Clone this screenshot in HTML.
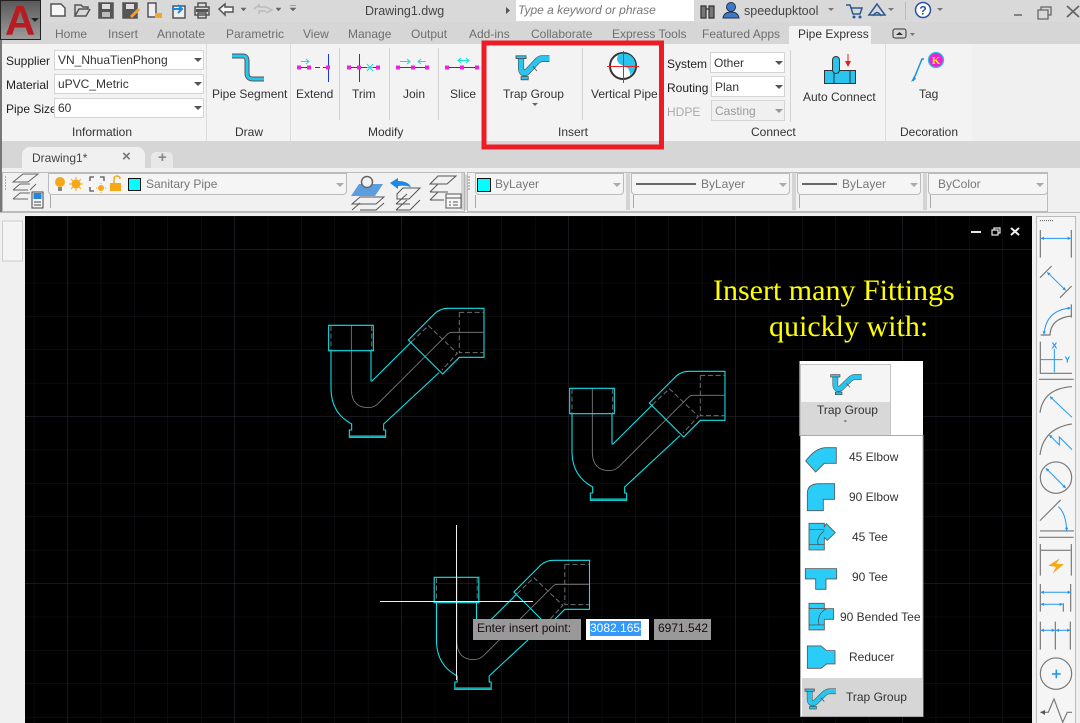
<!DOCTYPE html>
<html><head><meta charset="utf-8"><style>
html,body{margin:0;padding:0;background:#f0f0f0}
#r{position:relative;width:1080px;height:723px;overflow:hidden;background:#f0f0f0;font-family:"Liberation Sans",sans-serif;font-size:12px;color:#222}
.b{position:absolute;box-sizing:border-box}
.t{position:absolute;white-space:nowrap;line-height:14px}
.g{color:#6e6e6e}
.c{background:#fff;border:1px solid #d4d4d4;position:absolute;box-sizing:border-box}
.a{position:absolute;width:0;height:0;border-left:4px solid transparent;border-right:4px solid transparent;border-top:4px solid #555}
svg{position:absolute;left:0;top:0;overflow:visible}
</style></head><body><div id="r">
<div class="b" style="left:0;top:0;width:1080px;height:22px;background:#d9d9d9"></div>
<div class="b" style="left:0;top:22px;width:1080px;height:22px;background:#d6d6d6"></div>
<div class="b" style="left:0;top:141px;width:1080px;height:27px;background:#d6d6d6"></div>
<div class="b" style="left:0;top:44px;width:972px;height:97px;background:#f3f3f3"></div>
<div class="b" style="left:789px;top:26px;width:82px;height:18px;background:#f3f3f3;border-radius:2px 2px 0 0"></div>
<div class="b" style="left:0;top:0;width:2px;height:212px;background:#777"></div>
<!-- logo -->
<div class="b" style="left:0;top:0;width:41px;height:40px;border:1px solid #222;background:linear-gradient(#5a5a5a,#9c9c9c);"></div>
<div class="t" style="left:5px;top:3px;font-size:42px;line-height:36px;font-weight:bold;color:#b81c22;">A</div>
<div class="a" style="left:31px;top:18px;border-top-color:#222"></div>
<!-- search -->
<div class="b" style="left:516px;top:0;width:178px;height:21px;background:#fff"></div>
<div class="t" style="left:518px;top:3px;font-style:italic;color:#777">Type a keyword or phrase</div>
<div class="t" style="left:744px;top:4px;color:#444;font-size:12.5px">speedupktool</div>
<div class="t" style="left:365px;top:4px;color:#444;font-size:12.5px">Drawing1.dwg</div>
<!-- tabs -->
<div class="t g" style="left:55px;top:27px">Home</div>
<div class="t g" style="left:108px;top:27px">Insert</div>
<div class="t g" style="left:157px;top:27px">Annotate</div>
<div class="t g" style="left:226px;top:27px">Parametric</div>
<div class="t g" style="left:303px;top:27px">View</div>
<div class="t g" style="left:348px;top:27px">Manage</div>
<div class="t g" style="left:411px;top:27px">Output</div>
<div class="t g" style="left:469px;top:27px">Add-ins</div>
<div class="t g" style="left:531px;top:27px">Collaborate</div>
<div class="t g" style="left:612px;top:27px">Express Tools</div>
<div class="t g" style="left:702px;top:27px">Featured Apps</div>
<div class="t" style="left:798px;top:27px;color:#333">Pipe Express</div>
<!-- combos -->
<div class="t" style="left:6px;top:54px">Supplier</div>
<div class="t" style="left:6px;top:78px">Material</div>
<div class="t" style="left:6px;top:102px">Pipe Size</div>
<div class="c" style="left:54px;top:50px;width:150px;height:20px"></div><div class="t" style="left:58px;top:53px;color:#333">VN_NhuaTienPhong</div><div class="a" style="left:194px;top:58px"></div>
<div class="c" style="left:54px;top:74px;width:150px;height:20px"></div><div class="t" style="left:58px;top:77px;color:#333">uPVC_Metric</div><div class="a" style="left:194px;top:82px"></div>
<div class="c" style="left:54px;top:98px;width:150px;height:20px"></div><div class="t" style="left:58px;top:101px;color:#333">60</div><div class="a" style="left:194px;top:106px"></div>
<div class="t" style="left:667px;top:57px">System</div>
<div class="t" style="left:667px;top:81px">Routing</div>
<div class="t" style="left:667px;top:105px;color:#aaa">HDPE</div>
<div class="c" style="left:710px;top:52px;width:75px;height:21px"></div><div class="t" style="left:714px;top:56px;color:#333">Other</div><div class="a" style="left:775px;top:61px"></div>
<div class="c" style="left:711px;top:76px;width:74px;height:21px"></div><div class="t" style="left:715px;top:80px;color:#333">Plan</div><div class="a" style="left:775px;top:85px"></div>
<div class="c" style="left:711px;top:100px;width:74px;height:21px;background:#f0f0f0"></div><div class="t" style="left:715px;top:104px;color:#999">Casting</div><div class="a" style="left:775px;top:109px;border-top-color:#999"></div>
<!-- ribbon labels -->
<div class="t" style="left:212px;top:87px;color:#333">Pipe Segment</div>
<div class="t" style="left:296px;top:87px;color:#333">Extend</div>
<div class="t" style="left:352px;top:87px;color:#333">Trim</div>
<div class="t" style="left:403px;top:87px;color:#333">Join</div>
<div class="t" style="left:450px;top:87px;color:#333">Slice</div>
<div class="t" style="left:503px;top:87px;color:#333">Trap Group</div>
<div class="t" style="left:591px;top:87px;color:#333">Vertical Pipe</div>
<div class="t" style="left:803px;top:90px;color:#333">Auto Connect</div>
<div class="t" style="left:919px;top:87px;color:#333">Tag</div>
<div class="t" style="left:72px;top:125px;color:#333">Information</div>
<div class="t" style="left:235px;top:125px;color:#333">Draw</div>
<div class="t" style="left:368px;top:125px;color:#333">Modify</div>
<div class="t" style="left:558px;top:125px;color:#333">Insert</div>
<div class="t" style="left:751px;top:125px;color:#333">Connect</div>
<div class="t" style="left:900px;top:125px;color:#333">Decoration</div>
<!-- doc tab -->
<div class="b" style="left:22px;top:147px;width:123px;height:21px;background:#f0f0f0;border-radius:8px 8px 0 0"></div>
<div class="b" style="left:151px;top:152px;width:22px;height:16px;background:#e8e8e8;border-radius:5px 5px 0 0"></div>
<div class="t" style="left:32px;top:151px;color:#444">Drawing1*</div>
<div class="t" style="left:122px;top:150px;color:#777;font-size:15px;font-weight:bold">×</div>
<div class="t" style="left:158px;top:151px;color:#888;font-size:15px;font-weight:bold">+</div>
<!-- toolbar -->
<div class="b" style="left:2px;top:172px;width:463px;height:40px;border:1px solid #bbb;background:#f1f1f1"></div>
<div class="b" style="left:467px;top:172px;width:581px;height:40px;border:1px solid #bbb;background:#f1f1f1"></div>
<div class="b" style="left:0;top:212px;width:1080px;height:1px;background:#bbb"></div>
<div class="b" style="left:48px;top:173px;width:299px;height:22px;background:#f5f5f5;border:1px solid #bbb;border-radius:0 0 4px 4px"></div>
<div class="b" style="left:475px;top:173px;width:149px;height:22px;background:#f5f5f5;border:1px solid #bbb;border-radius:0 0 4px 4px"></div>
<div class="b" style="left:631px;top:173px;width:159px;height:22px;background:#f5f5f5;border:1px solid #bbb;border-radius:0 0 4px 4px"></div>
<div class="b" style="left:797px;top:173px;width:124px;height:22px;background:#f5f5f5;border:1px solid #bbb;border-radius:0 0 4px 4px"></div>
<div class="b" style="left:928px;top:173px;width:120px;height:22px;background:#f5f5f5;border:1px solid #bbb;border-radius:0 0 4px 4px"></div>
<div class="t" style="left:146px;top:177px;color:#777">Sanitary Pipe</div>
<div class="t" style="left:495px;top:177px;color:#777">ByLayer</div>
<div class="t" style="left:701px;top:177px;color:#777">ByLayer</div>
<div class="t" style="left:842px;top:177px;color:#777">ByLayer</div>
<div class="t" style="left:938px;top:177px;color:#777">ByColor</div>
<div class="a" style="left:336px;top:183px;border-top-color:#aaa"></div><div class="a" style="left:613px;top:183px;border-top-color:#aaa"></div><div class="a" style="left:779px;top:183px;border-top-color:#aaa"></div><div class="a" style="left:910px;top:183px;border-top-color:#aaa"></div><div class="a" style="left:1036px;top:183px;border-top-color:#aaa"></div>
<!-- canvas -->
<div class="b" style="left:25px;top:216px;width:1007px;height:507px;background:#000"></div>
<svg width="1080" height="723" viewBox="0 0 1080 723" fill="none">
<defs>
<pattern id="gm" patternUnits="userSpaceOnUse" x="0.5" y="15.5" width="33.4" height="33.4"><path d="M0 0V33.4M0 0H33.4" stroke="#14161c"/></pattern>
<pattern id="gM" patternUnits="userSpaceOnUse" x="67.5" y="82.5" width="167" height="167"><path d="M0 0V167M0 0H167" stroke="#262830"/></pattern>
<marker id="m" viewBox="0 0 10 10" refX="9" refY="5" markerWidth="10" markerHeight="10" markerUnits="userSpaceOnUse" orient="auto-start-reverse"><path d="M0 0L10 5L0 10Z" fill="#2196f3"/></marker>
<g id="tr">
<g stroke="#808080" stroke-width="2.5"><path d="M94 76V270Q96 323 145 323Q165 323 180 305L385 100Q390 97 397 97H490"/></g>
<g stroke="#6f6f6f" stroke-width="3" stroke-dasharray="15 8"><path d="M418 37H490M418 37V158H490M275 125L325 77L412 160L366 210M33 78V150M155 78V150"/></g>
<g stroke="#10e4ea" stroke-width="3.2"><path d="M26 76H160V152H26ZM33 152V270Q35 340 95 372V390H88V412H197V390H191V372L357 218M153 152V243H156L275 125M265 120L368 222L418 172H492V25H385Q358 25 340 45L265 120ZM90 408H195"/></g>
</g>
<g id="tg"><path d="M14 8V33Q15 49 30 43L60 14Q67 9 73 9H93" stroke="#444" stroke-width="17"/><path d="M14 8V33Q15 49 30 43L60 14Q67 9 73 9H93" stroke="#29c5ee" stroke-width="14"/><rect x="0" y="2" width="28" height="7" fill="#29c5ee" stroke="#444" stroke-width="2"/><rect x="14" y="54" width="20" height="8" fill="#29c5ee" stroke="#444" stroke-width="2"/><path d="M47 28L58 40" stroke="#444" stroke-width="2"/></g>
</defs>
<!-- ribbon dividers -->
<path d="M206.5 44V141M290.5 44V141M885.5 44V141" stroke="#dcdcdc"/>
<path d="M339.5 48V120M389.5 48V120M438.5 48V120M582.5 48V120M790.5 50V122" stroke="#d2d2d2"/>
<!-- QAT -->
<g stroke="#555" stroke-width="1.5" transform="translate(0,0)">
<path d="M51 4H61L65 8V16H51Z" fill="#f7f7f7"/>
<path d="M75 16V5H81L83 7H88V9H79L75 16H86L90 9" />
<path d="M99 3H113V18H99Z" fill="#555"/><rect x="102" y="4" width="8" height="5" fill="#ddd" stroke="none"/><rect x="102" y="12" width="8" height="5" fill="#bbb" stroke="none"/>
<path d="M123 3H137V18H123Z" fill="#555"/><rect x="126" y="4" width="8" height="5" fill="#ddd" stroke="none"/><path d="M131 17L139 9" stroke="#f0a030" stroke-width="3"/>
<path d="M148 3H156V17H148Z" fill="#eee"/><rect x="155" y="13" width="7" height="5" fill="#f4a820" stroke="none"/>
<path d="M173 6H185V18H173Z" fill="#eee"/><path d="M172 9H182M178 5L182 9L178 13" stroke="#1c88d8" stroke-width="2"/>
<path d="M198 3H206V7H198ZM195 7H209V15H195ZM198 13H206V18H198Z" fill="#ddd"/><rect x="196" y="9" width="12" height="3" fill="#555" stroke="none"/>
<path d="M219 9L225 4V7H233V12H225V15Z" fill="#f5f5f5"/>
<path d="M254 9L259 5V7H266M259 14V11H266M266 7L272 10L266 13" stroke="#bbb" fill="none"/>
</g>
<path d="M241 8l2.5 3l2.5-3ZM276 8l2.500 3l2.500-3ZM290 8l3 3l3-3ZM290 5.500h6" fill="#666" stroke="#666" stroke-width=".5"/>
<path d="M506 7l4 3.500l-4 3.500Z" fill="#555"/>
<!-- user area -->
<g stroke="#333" stroke-width="1.2"><path d="M701 6h5v12h-5ZM709 6h5v12h-5ZM706 9h3" fill="#777"/></g>
<circle cx="731" cy="7" r="4.500" fill="#3f78c8" stroke="#234"/><path d="M723 18Q724 12 731 12Q738 12 739 18Z" fill="#3f78c8" stroke="#234"/>
<path d="M828 8l3 3l3-3ZM888 8l3 3l3-3ZM937 8l3 3l3-3Z" fill="#777"/>
<path d="M846 5H850L853 14H860L862 8H851" stroke="#2c5a90" stroke-width="1.500"/><circle cx="854" cy="17" r="1.500" fill="#2c5a90"/><circle cx="860" cy="17" r="1.500" fill="#2c5a90"/>
<path d="M877 4L869 15H885ZM873 16Q877 9 881 16" stroke="#2c5a90" stroke-width="1.500"/>
<path d="M905.500 2V20" stroke="#bbb"/>
<circle cx="923" cy="10" r="7.500" fill="#fff" stroke="#2c50a0" stroke-width="1.500"/>
<text x="923" y="14.500" font-family="Liberation Sans" font-size="12" font-weight="bold" fill="#2c50a0" text-anchor="middle">?</text>
<path d="M1014 15H1022" stroke="#666" stroke-width="1.500"/><path d="M1038 10H1048V19H1038ZM1041 10V7H1051V15H1048" stroke="#666" stroke-width="1.300"/><path d="M1067 6L1079 17M1079 6L1067 17" stroke="#666" stroke-width="1.800"/>
<rect x="893" y="29" width="13" height="9" rx="2" stroke="#333"/><path d="M896 35l3.500-3l3.500 3Z" fill="#333"/><path d="M910 33l2.500 3l2.500-3Z" fill="#777"/>
<!-- pipe segment icon -->
<path d="M232 56H243Q247 56 247 61V73Q247 79 253 79H264" stroke="#555" stroke-width="5"/><path d="M232 56H243Q247 56 247 61V73Q247 79 253 79H264" stroke="#29c5ee" stroke-width="3"/>
<!-- modify icons -->
<g stroke="#1a36e0" stroke-width="1"><path d="M299 67.500H310M315 67.500H320M323 67.500H328M328.500 54V82M359.500 54V82M349 67.500H367M373 67.500H378M398 67.500H427M447 67.500H477"/></g>
<g fill="#f020e0"><rect x="297" y="65.500" width="4" height="4"/><rect x="307" y="65.500" width="4" height="4"/><rect x="326" y="65.500" width="4" height="4"/><rect x="347" y="65.500" width="4" height="4"/><rect x="357" y="65.500" width="4" height="4"/><rect x="376" y="65.500" width="4" height="4"/><rect x="396" y="65.500" width="4" height="4"/><rect x="411" y="65.500" width="4" height="4"/><rect x="425" y="65.500" width="4" height="4"/><rect x="445" y="65.500" width="4" height="4"/><rect x="460" y="65.500" width="4" height="4"/><rect x="475" y="65.500" width="4" height="4"/></g>
<g stroke="#18dcd8"><path d="M301 61.500H309M306 59L309 61.500L306 64M367 64L373 71M373 64L367 71M367 67.500H373M400 61.500H410M407 59L410 61.500L407 64M418 61.500H426M421 59L418 61.500L421 64M458 60.500H469M461 58L458 60.500L461 63M466 58L469 60.500L466 63"/></g>
<!-- trap icon ribbon -->
<use href="#tg" transform="translate(516,55) scale(.36,.4)"/>
<path d="M532 103l3 3l3-3Z" fill="#666"/>
<!-- vertical pipe -->
<circle cx="623" cy="66" r="13" fill="#fff" stroke="#333" stroke-width="2"/>
<path d="M619 54Q632 52 635 62Q637 70 630 75Q630 68 624 66Q618 64 617 60Q617 56 619 54Z" fill="#29c5ee"/>
<path d="M607 66.500H639M623.500 51V83" stroke="#e82020"/>
<!-- auto connect -->
<rect x="824.500" y="70.500" width="31" height="13" fill="#29c5ee" stroke="#333"/><path d="M834 71V84M850 71V84" stroke="#333"/>
<rect x="832.500" y="56.500" width="7" height="17" rx="3.500" fill="#29c5ee" stroke="#333"/>
<path d="M848 54V62" stroke="#e02020"/><path d="M845 61H851L848 67Z" fill="#e02020"/>
<!-- tag -->
<path d="M924 59H922L913 81" stroke="#1c90e0" stroke-width="1.500"/><path d="M911 82L914 76L916 79Z" fill="#1c90e0"/>
<circle cx="936" cy="60" r="7.500" fill="#f020d0" stroke="#18c8e8" stroke-width="1.300"/>
<text x="936" y="64" font-family="Liberation Serif" font-size="11" font-weight="bold" fill="#ffe020" text-anchor="middle">K</text>
<!-- red box -->
<rect x="484" y="43" width="177.500" height="104" stroke="#ed1c24" stroke-width="5"/>
<!-- toolbar icons -->
<path d="M5 177h1M5 180h1M5 183h1M5 186h1M5 189h1" stroke="#666"/>
<path d="M468 177h2M468 180h2M468 183h2M468 186h2M468 189h2" stroke="#888"/>
<g stroke="#666"><path d="M13 182L23 174H38L28 182ZM13 190L20 184H30M13 199L20 193H30M13 190H28M13 199H28M36 184L30 190"/><rect x="32" y="192" width="11" height="16" fill="#f6f6f6" stroke="#444"/></g><rect x="33.500" y="193" width="8" height="6" fill="#1c88e0"/><path d="M34 202h7M34 205h7" stroke="#444"/>
<path d="M50.500 195V208M475.500 195V208M633.500 195V208M799.500 195V208M930.500 195V208" stroke="#aaa"/>
<path d="M462 173V210M464 173V210M466 175V210M627 173V210M629 173V210M793 173V210M795 173V210M924 173V210M926 173V210" stroke="#aaa" stroke-width=".8"/>
<circle cx="60" cy="182" r="5" fill="#f5a818"/><rect x="58" y="187" width="4" height="4" fill="#888"/>
<circle cx="76" cy="184" r="4.500" fill="#f5a818"/><path d="M76 177V180M76 188V191M69 184H72M80 184H83M71 179L73 181M79 187L81 189M81 179L79 181M71 189L73 187" stroke="#f5a818"/>
<path d="M90 181V177H94M100 177H104V181M90 187V191H94" stroke="#555" stroke-width="1.300"/><circle cx="101" cy="188" r="3" fill="#f5a818"/><path d="M101 183V184M101 192V193M96 188H97M105 188H106" stroke="#f5a818"/>
<rect x="110" y="183" width="11" height="8" fill="#f5a818"/><path d="M114 183V179Q114 176 117 176Q120 176 120 179" stroke="#f5a818" stroke-width="1.500"/>
<rect x="128.500" y="178.500" width="12" height="12" fill="#00ffff" stroke="#111"/>
<rect x="477.500" y="178.500" width="13" height="13" fill="#00ffff" stroke="#111"/>
<path d="M636 184H696M802 184H837" stroke="#111" stroke-width="1.300"/>
<g stroke="#555"><path d="M352 204L360 197H384L376 204ZM352 210L360 203M360 210H376L384 203"/></g><path d="M351 196L359 184H383L375 196Z" fill="#5c9ce0"/><circle cx="367" cy="182" r="5.500" fill="#f4f4f4" stroke="#666" stroke-width="1.500"/>
<path d="M390 183L398 178V181Q408 181 411 187Q405 185 398 186V189Z" fill="#1c88e0"/><g stroke="#555"><path d="M397 194L403 188H420L409 199H397ZM396 204L407 194M396 210L407 200M396 204H410M396 210H410L420 200"/></g>
<g stroke="#555"><path d="M430 184L438 176H456L447 184ZM430 192L438 184M430 192H448M430 200L438 192M430 200H444"/><rect x="446" y="194" width="15" height="14" fill="#f7f7f7" stroke="#555"/><path d="M446 198H461M449 202H451M453 202H458M449 205H451M453 205H458"/></g>
<!-- canvas grid -->
<rect x="25" y="216" width="1007" height="507" fill="url(#gm)"/>
<rect x="25" y="216" width="1007" height="507" fill="url(#gM)"/>
<use href="#tr" transform="translate(320,300) scale(.3333)"/>
<use href="#tr" transform="translate(561,363) scale(.3333)"/>
<use href="#tr" transform="translate(425.500,552) scale(.3333)"/>
<path d="M456.500 525V680M380 601.500H533" stroke="#f0f0f0"/>
<path d="M971 232H981" stroke="#e8e8e8" stroke-width="2"/><path d="M992 230H998V235H992ZM994 230V228H1000V233H998" stroke="#e8e8e8" stroke-width="1.200"/><path d="M1011 228L1019 235M1019 228L1011 235" stroke="#eee" stroke-width="2"/>
<!-- left strip -->
<path d="M8 222h12" stroke="#777" stroke-dasharray="1 1"/>
<rect x="2.500" y="221" width="20" height="40" fill="#f4f4f4" stroke="#ccc"/>
<!-- right toolbar -->
<rect x="1036.500" y="216.500" width="39" height="507" fill="#f5f5f5" stroke="#bbb"/>
<g transform="translate(1030,215) scale(.3333)">
<path d="M30 17H70" stroke="#555" stroke-width="3" stroke-dasharray="3 3"/>
<g stroke="#777" stroke-width="3.500">
<path d="M31 45V128M124 45V128M30 188L65 153M90 248L125 213M124 268V308M32 360H60Q62 310 124 303M31 380V475H126M27 493H131M30 593Q40 520 126 515M30 720Q40 640 126 627"/>
<circle cx="78" cy="788" r="47"/>
<path d="M30 917L92 855M30 948H132M27 967H131M31 987V1082M124 987V1082M31 1107V1190M122 1107V1190M100 1165V1190M31 1220V1304M76 1220V1304M121 1220V1304"/>
<circle cx="78" cy="1376" r="47"/>
<path d="M31 1492H55L72 1452L98 1522L112 1492H126"/>
</g>
<g stroke="#2196f3" stroke-width="3">
<path d="M33 70H122" marker-start="url(#m)" marker-end="url(#m)"/>
<path d="M52 172L107 226" marker-start="url(#m)" marker-end="url(#m)"/>
<path d="M122 279Q48 285 42 358" marker-start="url(#m)" marker-end="url(#m)"/>
<path d="M32 434H98M73 402V472"/>
<path d="M60 545L126 607" marker-start="url(#m)"/>
<path d="M58 660L88 690V666L126 704" marker-start="url(#m)"/>
<path d="M48 760L107 819" marker-start="url(#m)" marker-end="url(#m)"/>
<path d="M85 875Q108 895 110 947" marker-end="url(#m)"/>
<path d="M33 1132H122" marker-start="url(#m)" marker-end="url(#m)"/>
<path d="M33 1168H98" marker-start="url(#m)" marker-end="url(#m)"/>
<path d="M33 1246H74" marker-start="url(#m)" marker-end="url(#m)"/>
<path d="M78 1246H120" marker-start="url(#m)" marker-end="url(#m)"/>
<path d="M66 1377H92M79 1364V1390" stroke-width="5"/>
</g>
<text x="73" y="401" font-family="Liberation Sans" font-size="26" font-weight="bold" fill="#2196f3" text-anchor="middle">X</text>
<text x="112" y="442" font-family="Liberation Sans" font-size="26" font-weight="bold" fill="#2196f3" text-anchor="middle">Y</text>
<path d="M33 1006H122" stroke="#666" stroke-width="3"/>
<path d="M55 1052L90 1030L78 1047H102L68 1076L78 1056Z" fill="#f5a818"/>
<path d="M31 1492L45 1485V1500Z" fill="#555"/>
</g>
<!-- menu -->
<rect x="799.500" y="361" width="123.500" height="75" fill="#fff"/>
<rect x="800" y="364" width="91" height="38" fill="#f5f5f5"/>
<rect x="800" y="402" width="91" height="33" fill="#d8d8d8"/>
<rect x="800.500" y="364.500" width="90" height="71" stroke="#c4c4c4"/>
<rect x="800.500" y="435.500" width="122.500" height="281" fill="#fff" stroke="#aaa"/>
<rect x="802" y="678" width="121" height="38" fill="#d6d6d6"/>
<g transform="translate(795,360) scale(.3333)">
<g fill="#29cdf7" stroke="#555" stroke-width="2.500">
<path d="M32 303Q60 265 90 263H124V310H88L62 336Z"/>
<path d="M37 452V400Q37 372 70 371H119V418H85V452Z"/>
<path d="M94 491L121 518L97 541L88 533V570H42V490H88V500Z"/>
<path d="M31 626H125V657H93V688H62V657H31Z"/>
<path d="M42 730H88V746H116V778H88V810H42Z"/>
<path d="M37 858H78L95 872H120V912H95L78 925H37Z"/>
</g>
<path d="M42 508H88M42 554H88M70 553Q62 535 88 512" stroke="#444" stroke-width="2"/>
<path d="M42 746H88M42 795H88M72 794Q65 760 95 746" stroke="#444" stroke-width="2"/>
<use href="#tg" transform="translate(107,42)"/>
<use href="#tg" transform="translate(30,985)"/>
<path d="M146 181l5 6l5-6Z" fill="#666"/>
</g>
</svg>
<div class="t" style="left:817px;top:403px;color:#333">Trap Group</div>
<div class="t" style="left:849px;top:450px;color:#333">45 Elbow</div>
<div class="t" style="left:849px;top:490px;color:#333">90 Elbow</div>
<div class="t" style="left:852px;top:530px;color:#333">45 Tee</div>
<div class="t" style="left:852px;top:570px;color:#333">90 Tee</div>
<div class="t" style="left:840px;top:610px;color:#333">90 Bended Tee</div>
<div class="t" style="left:849px;top:650px;color:#333">Reducer</div>
<div class="t" style="left:846px;top:690px;color:#333">Trap Group</div>
<div class="t" style="left:713px;top:273px;font:30px/36px 'Liberation Serif',serif;color:#ffff00">Insert many Fittings</div>
<div class="t" style="left:769px;top:309px;font:30px/36px 'Liberation Serif',serif;color:#ffff00">quickly with:</div>
<!-- tooltip -->
<div class="b" style="left:473px;top:619px;width:108px;height:21px;background:#999"></div>
<div class="t" style="left:477px;top:621px;color:#1a0a14">Enter insert point:</div>
<div class="b" style="left:586px;top:619px;width:63px;height:21px;background:#fff"></div>
<div class="b" style="left:590px;top:621px;width:51px;height:15px;background:#3399ff"></div>
<div class="t" style="left:590px;top:621px;color:#fff">3082.1654</div>
<div class="b" style="left:654px;top:619px;width:57px;height:21px;background:#999"></div>
<div class="t" style="left:658px;top:621px;color:#1a0a14">6971.542</div>
</div></body></html>
